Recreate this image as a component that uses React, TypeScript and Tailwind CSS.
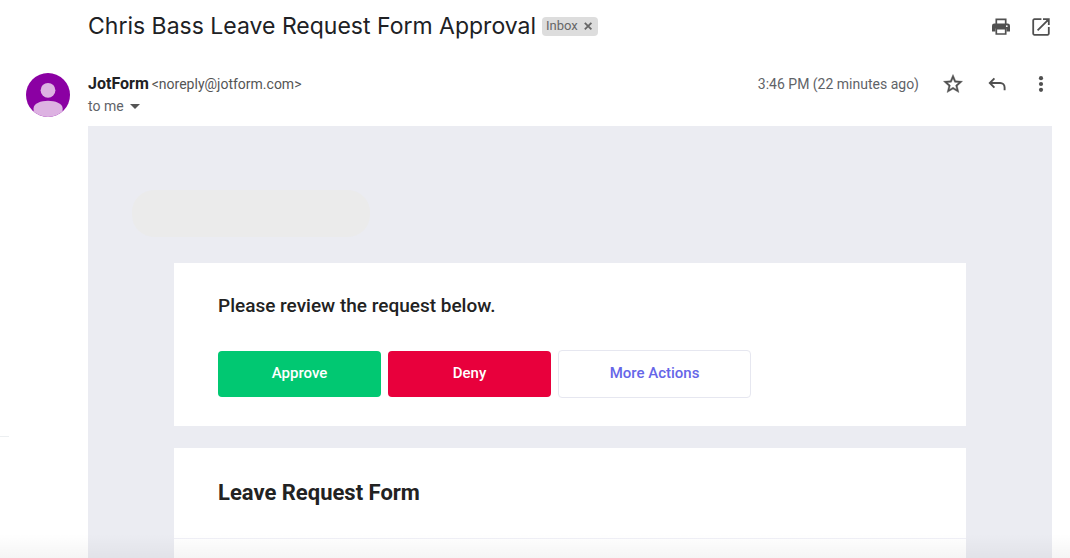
import React from "react";

type IconButtonProps = { label: string; children: React.ReactNode };

function IconButton({ label, children }: IconButtonProps) {
  return (
    <button type="button" aria-label={label} className="flex size-5 items-center justify-center text-[#505050]">
      {children}
    </button>
  );
}

function PrintIcon() {
  return (
    <svg viewBox="0 0 20 20" className="size-5" fill="none" stroke="currentColor" strokeWidth="1.7" aria-hidden="true">
      <path d="M3.4 6.4h13.2a2.4 2.4 0 0 1 2.4 2.4v5.6h-3.5v-3h-11v3H1V8.8a2.4 2.4 0 0 1 2.4-2.4Z" fill="currentColor" stroke="none" />
      <path d="M5.3 7V2.4h9.4V7M5.3 11.6h9.4v5.4H5.3z" />
      <circle cx="15.8" cy="9.2" r="0.9" fill="#fff" stroke="none" />
    </svg>
  );
}

function NewWindowIcon() {
  return (
    <svg viewBox="0 0 20 20" className="size-5" fill="none" stroke="currentColor" strokeWidth="1.8" aria-hidden="true">
      <path d="M10.4 2.2H3.4a1.2 1.2 0 0 0-1.2 1.2v13.2a1.2 1.2 0 0 0 1.2 1.2h13.2a1.2 1.2 0 0 0 1.2-1.2V10" />
      <path d="M6.6 13.4 17.4 2.6M12 2.2h5.8V8" />
      <path d="M14 2h4v4z" fill="currentColor" stroke="none" />
    </svg>
  );
}

function StarIcon() {
  return (
    <svg viewBox="1.5 1.5 21 21" className="size-5" fill="currentColor" stroke="currentColor" strokeWidth="0.4" aria-hidden="true">
      <path d="M22 9.24l-7.19-.62L12 2 9.19 8.63 2 9.24l5.46 4.73L5.82 21 12 17.27 18.18 21l-1.63-7.03L22 9.24zM12 15.4l-3.76 2.27 1-4.28-3.32-2.88 4.38-.38L12 6.1l1.71 4.04 4.38.38-3.32 2.88 1 4.28L12 15.4z" />
    </svg>
  );
}

function ReplyIcon() {
  return (
    <svg viewBox="0 0 20 20" className="size-5" fill="none" stroke="currentColor" strokeWidth="1.9" aria-hidden="true">
      <path d="M7.4 4.4 2.8 9l4.6 4.6M3 9h10.2a4.4 4.4 0 0 1 4.4 4.4v2.8" />
    </svg>
  );
}

function MoreIcon() {
  return (
    <svg viewBox="0 0 20 20" className="size-5" fill="currentColor" aria-hidden="true">
      <circle cx="10" cy="4.2" r="2.1" />
      <circle cx="10" cy="10" r="2.1" />
      <circle cx="10" cy="15.8" r="2.1" />
    </svg>
  );
}

function Avatar() {
  return (
    <svg viewBox="0 0 44 44" className="size-11 shrink-0" role="img" aria-label="JotForm">
      <defs>
        <clipPath id="avatar-circle">
          <circle cx="22" cy="22" r="22" />
        </clipPath>
      </defs>
      <g clipPath="url(#avatar-circle)">
        <rect width="44" height="44" fill="#8b00a3" />
        <circle cx="22" cy="17.3" r="7.4" fill="#ddb2e2" />
        <path d="M7.6 44v-8.8C7.6 30.5 15 27.8 22 27.8s14.6 2.7 14.6 7.4V44z" fill="#ddb2e2" />
      </g>
    </svg>
  );
}

export default function App() {
  return (
    <div className="relative flex h-screen overflow-hidden bg-white font-['Roboto','Liberation_Sans',sans-serif] text-[#202124]">
      <aside className="w-[9px] shrink-0 pt-[436px]">
        <div className="border-t border-[#eceff1]" />
      </aside>

      <main className="flex min-w-0 flex-1 flex-col pr-[18px]">
        <header className="flex h-[52px] items-center pr-px pl-[79px]">
          <h1 className="text-[23px] leading-8 whitespace-nowrap font-['Inter','Liberation_Sans',sans-serif]">
            Chris Bass Leave Request Form Approval
          </h1>
          <span className="ml-1.5 flex h-[19px] items-center gap-1 rounded bg-[#dddddd] px-1 text-[13px] text-[#666666]">
            Inbox
            <button type="button" aria-label="Remove label Inbox" className="flex size-3 items-center justify-center">
              <svg viewBox="0 0 12 12" className="size-3" stroke="currentColor" strokeWidth="1.8" aria-hidden="true">
                <path d="M2.8 2.8l6.6 6.6M9.4 2.8 2.8 9.4" />
              </svg>
            </button>
          </span>
          <div className="ml-auto flex gap-5 pt-0.5">
            <IconButton label="Print all"><PrintIcon /></IconButton>
            <IconButton label="In new window"><NewWindowIcon /></IconButton>
          </div>
        </header>

        <div className="flex h-[74px] items-start gap-[18px] pt-[21px] pr-px pl-[17px]">
          <Avatar />
          <div>
            <div className="flex h-[22px] items-center gap-[3px] whitespace-nowrap">
              <span className="text-base font-bold">JotForm</span>
              <span className="text-sm text-[#555555]">&lt;noreply@jotform.com&gt;</span>
            </div>
            <button type="button" className="flex h-[22px] items-center gap-1.5 text-sm text-[#5f6368]">
              to me
              <svg viewBox="0 0 10 5" className="h-[5px] w-2.5" fill="#555555" aria-hidden="true">
                <path d="M0 0h10L5 5z" />
              </svg>
            </button>
          </div>
          <div className="ml-auto flex h-[22px] items-center gap-6">
            <time className="text-sm whitespace-nowrap text-[#5f6368]">3:46 PM (22 minutes ago)</time>
            <IconButton label="Star"><StarIcon /></IconButton>
            <IconButton label="Reply"><ReplyIcon /></IconButton>
            <IconButton label="More"><MoreIcon /></IconButton>
          </div>
        </div>

        <article className="ml-[79px] flex flex-1 flex-col bg-[#ebecf2] px-[86px] pt-16">
          <div className="-ml-[42px] h-[47px] w-[238px] rounded-[22px] bg-[#ebebeb]" />

          <section className="mt-[26px] h-[163px] shrink-0 bg-white px-11 pt-[31px]">
            <h2 className="text-[19px] leading-6 font-medium text-[#222222]">Please review the request below.</h2>
            <div className="mt-8 flex items-center gap-[7px] text-[15px] font-medium">
              <button type="button" className="h-[46px] w-[163px] rounded bg-[#01c872] pb-0.5 text-white">Approve</button>
              <button type="button" className="h-[46px] w-[163px] rounded bg-[#e8003c] pb-0.5 text-white">Deny</button>
              <button type="button" className="h-12 w-[193px] rounded border border-[#e6e7f0] bg-white pb-0.5 text-[#6666e8]">
                More Actions
              </button>
            </div>
          </section>

          <section className="mt-[22px] flex-1 bg-white">
            <h2 className="h-[91px] border-b border-[#f0f0f7] px-11 pt-[31px] text-[22px] leading-7 font-bold text-[#222222]">
              Leave Request Form
            </h2>
          </section>
        </article>
      </main>

      <div className="pointer-events-none absolute inset-x-0 bottom-0 h-6 bg-linear-to-t from-black/4 to-transparent" />
    </div>
  );
}
